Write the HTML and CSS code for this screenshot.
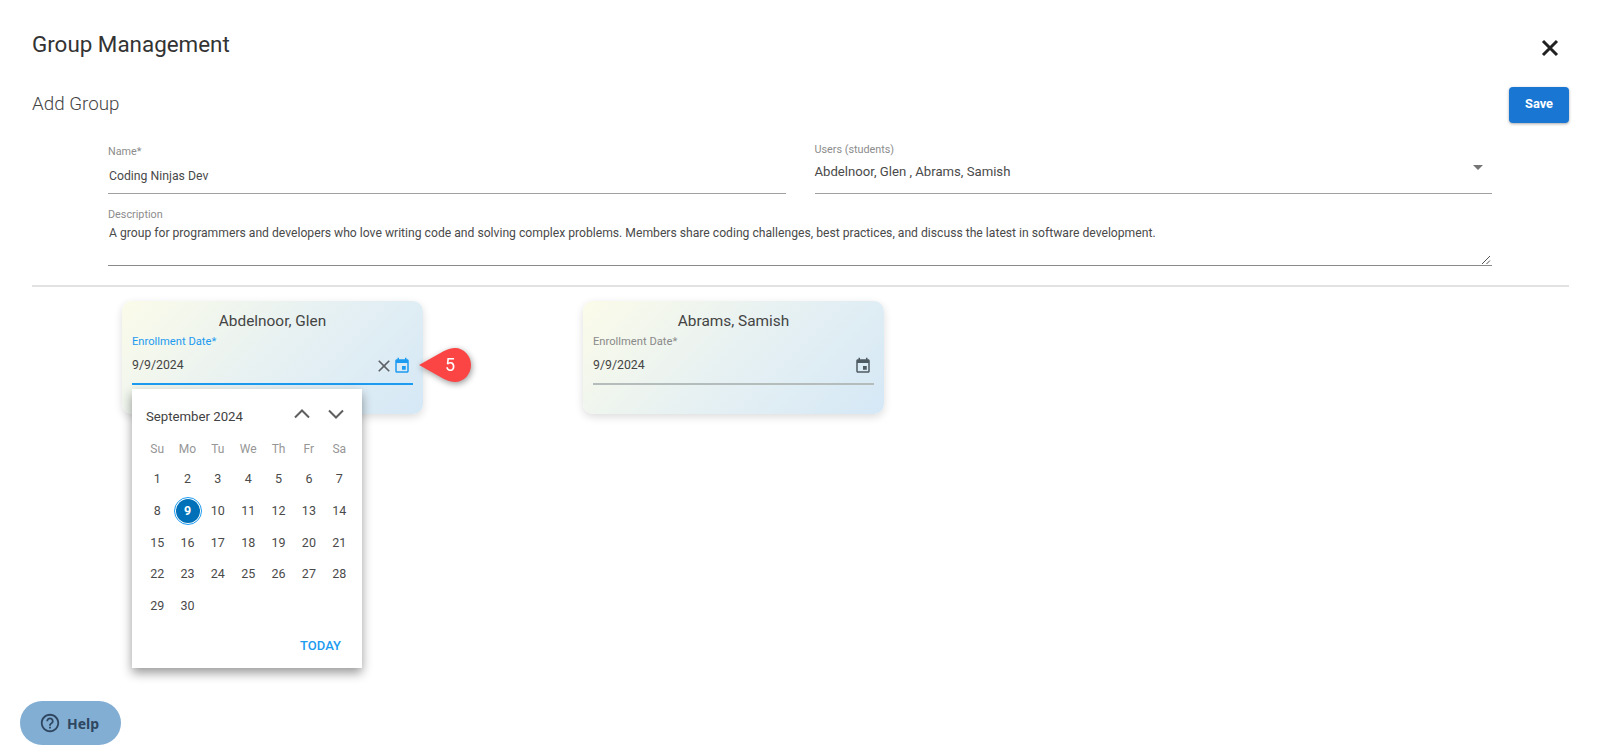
FILE: index.html
```html
<!DOCTYPE html>
<html lang="en">
<head>
<meta charset="utf-8">
<title>Group Management</title>
<link rel="stylesheet" href="styles.css">
</head>
<body>
<main class="page">
  <header class="title-row">
    <h1 class="title">Group Management</h1>
    <button class="close" aria-label="Close"><svg viewBox="0 0 20 20" width="20" height="20"><path d="M3 3 17 17M17 3 3 17"/></svg></button>
  </header>
  <div class="sub-row">
    <h2 class="subtitle">Add Group</h2>
    <button class="save">Save</button>
  </div>
  <form class="form">
    <div class="form-row">
      <div class="field">
        <span class="label">Name*</span>
        <span class="value name-value">Coding Ninjas Dev</span>
      </div>
      <div class="field select">
        <span class="label">Users (students)</span>
        <span class="value">Abdelnoor, Glen , Abrams, Samish</span>
        <span class="caret"></span>
      </div>
    </div>
    <div class="field desc">
      <span class="label">Description</span>
      <span class="value">A group for programmers and developers who love writing code and solving complex problems. Members share coding challenges, best practices, and discuss the latest in software development.</span>
      <svg class="resize" viewBox="0 0 10 10" width="10" height="10"><path d="M1 9 9 1M5.5 9 9 5.5"/></svg>
    </div>
  </form>
  <hr class="divider">
  <section class="cards">
    <article class="card">
      <h3 class="card-name">Abdelnoor, Glen</h3>
      <span class="date-label active">Enrollment Date*</span>
      <div class="date-input active">
        <span class="date-value">9/9/2024</span>
        <svg class="clear-icon" viewBox="0 0 24 24" width="20" height="20"><path d="M19 6.41 17.59 5 12 10.59 6.41 5 5 6.41 10.59 12 5 17.59 6.41 19 12 13.41 17.59 19 19 17.59 13.41 12z"/></svg>
        <svg class="cal-icon" viewBox="0 0 24 24" width="18" height="18"><path d="M19 3h-1V1h-2v2H8V1H6v2H5c-1.11 0-2 .9-2 2v14c0 1.1.89 2 2 2h14c1.1 0 2-.9 2-2V5c0-1.1-.9-2-2-2zm0 16H5V8h14v11zM12 12h5v5h-5z"/></svg>
      </div>
      <div class="callout">
        <svg viewBox="0 0 52 34" width="52" height="34"><path d="M0 17 25 3C29 1 33 0 36 0c9 0 16 8 16 17s-7 17-16 17c-3 0-7-1-11-3z"/></svg>
        <span class="callout-num">5</span>
      </div>
      <div class="picker">
        <div class="picker-head">
          <span class="month">September 2024</span>
          <svg viewBox="0 0 24 24" width="24" height="24"><path d="M5 15.5 12 8.5l7 7" /></svg>
          <svg viewBox="0 0 24 24" width="24" height="24"><path d="M5 8.5 12 15.5l7-7" /></svg>
        </div>
        <div class="week">
          <span>Su</span><span>Mo</span><span>Tu</span><span>We</span><span>Th</span><span>Fr</span><span>Sa</span>
        </div>
        <div class="days">
          <span>1</span><span>2</span><span>3</span><span>4</span><span>5</span><span>6</span><span>7</span>
          <span>8</span><span class="sel"><b>9</b></span><span>10</span><span>11</span><span>12</span><span>13</span><span>14</span>
          <span>15</span><span>16</span><span>17</span><span>18</span><span>19</span><span>20</span><span>21</span>
          <span>22</span><span>23</span><span>24</span><span>25</span><span>26</span><span>27</span><span>28</span>
          <span>29</span><span>30</span>
        </div>
        <div class="picker-foot"><span class="today">TODAY</span></div>
      </div>
    </article>
    <article class="card">
      <h3 class="card-name">Abrams, Samish</h3>
      <span class="date-label">Enrollment Date*</span>
      <div class="date-input">
        <span class="date-value">9/9/2024</span>
        <svg class="cal-icon" viewBox="0 0 24 24" width="18" height="18"><path d="M19 3h-1V1h-2v2H8V1H6v2H5c-1.11 0-2 .9-2 2v14c0 1.1.89 2 2 2h14c1.1 0 2-.9 2-2V5c0-1.1-.9-2-2-2zm0 16H5V8h14v11zM12 12h5v5h-5z"/></svg>
      </div>
    </article>
  </section>
</main>
<button class="help">
  <svg viewBox="0 0 24 24" width="22" height="22"><path d="M11 18h2v-2h-2v2zm1-16C6.48 2 2 6.48 2 12s4.48 10 10 10 10-4.48 10-10S17.52 2 12 2zm0 18c-4.41 0-8-3.59-8-8s3.59-8 8-8 8 3.59 8 8-3.59 8-8 8zm0-14c-2.21 0-4 1.79-4 4h2c0-1.1.9-2 2-2s2 .9 2 2c0 2-3 1.75-3 5h2c0-2.25 3-2.5 3-5 0-2.21-1.79-4-4-4z"/></svg>
  <span>Help</span>
</button>
</body>
</html>
```

FILE: styles.css
```css
* { box-sizing: border-box; }
html, body { margin: 0; height: 755px; overflow: hidden; background: #fff; }
body { font-family: Roboto, "Liberation Sans", sans-serif; color: #424242; }
.page { padding: 0 31px 0 32px; }

.title-row { display: flex; justify-content: space-between; align-items: center; height: 88px; }
.title { margin: 0; font-size: 22.4px; font-weight: 400; color: #333; }
.close { border: 0; background: none; padding: 0; margin: 7px 9px 0 0; width: 20px; height: 20px; }
.close svg { display: block; fill: none; stroke: #212121; stroke-width: 3; }

.sub-row { display: flex; justify-content: space-between; align-items: center; height: 36px; margin-top: -1px; }
.subtitle { margin: 0 0 2px; font-size: 18.8px; font-weight: 300; color: #444; }
.save { width: 60px; height: 36px; padding: 0 0 4px; border: 0; border-radius: 4px; background: #1976d2; color: #fff; font: 700 12.8px Roboto, sans-serif; box-shadow: 0 1px 3px rgba(0,0,0,.35); }

.form { padding: 16px 77px 0 76px; }
.form-row { display: flex; gap: 29px; }
.field { flex: 1; position: relative; display: flex; flex-direction: column; border-bottom: 1px solid #a0a0a0; }
.form-row .field { height: 55px; padding-top: 6px; }
.label { font-size: 10.8px; color: #8c8c8c; line-height: 14px; }
.value { font-size: 12.17px; color: #4a4a4a; line-height: 16px; padding-left: 1px; }
.form-row .value { margin-top: 9px; font-size: 12.25px; }
.form-row .select { padding-top: 4px; }
.form-row .select .value { margin-top: 7px; font-size: 13.15px; padding-left: 0; }
.caret { position: absolute; right: 9px; top: 26px; width: 0; height: 0; border: 5px solid transparent; border-top-color: #757575; border-bottom: 0; }
.desc { margin-top: 14px; height: 58px; border-bottom-color: #8a8a8a; }
.desc .value { margin-top: 3px; }
.resize { position: absolute; right: 1px; bottom: 0; fill: none; stroke: #555; stroke-width: 1; }

.divider { margin: 19px 0 0; border: 0; border-top: 2px solid #e2e2e2; }

.cards { display: flex; gap: 160px; padding: 14px 0 0 90px; }
.card { position: relative; width: 301px; height: 113px; border-radius: 10px; padding: 11px 10px 0; background: linear-gradient(135deg, #fbfbe9 0%, #e5f0f3 55%, #d5e8f6 100%); box-shadow: 0 3px 8px rgba(0,0,0,.14); }
.card-name { margin: 0; text-align: center; font-size: 15.4px; font-weight: 400; line-height: 18px; color: #444; }
.date-label { display: block; margin-top: 5px; font-size: 11.2px; line-height: 14px; color: #8a8a8a; }
.date-label.active { color: #1d9bf0; }
.date-input { display: flex; align-items: center; height: 36px; border-bottom: 2px solid #b4bcbc; padding-right: 2px; }
.date-input.active { border-bottom-color: #1d9bf0; }
.date-value { flex: 1; margin-bottom: 2px; font-size: 12.3px; color: #444; }
.clear-icon { fill: #5f6368; margin-right: -1px; }
.cal-icon { fill: #4f5b62; }
.date-input.active .cal-icon { fill: #1d9bf0; }

.callout { position: absolute; left: 297px; top: 47px; width: 52px; height: 34px; filter: drop-shadow(1px 2px 3px rgba(0,0,0,.4)); }
.callout svg { display: block; fill: #fb4444; }
.callout-num { position: absolute; left: 20px; top: 0; width: 22px; text-align: center; line-height: 34px; color: #fff; font-size: 18px; }

.picker { position: absolute; z-index: 2; left: 10px; top: 88px; width: 230px; height: 279px; background: #fff; box-shadow: 0 5px 10px rgba(0,0,0,.4); padding: 11px 10px 0 10px; }
.picker-head { display: flex; align-items: center; height: 32px; gap: 10px; padding-right: 4px; }
.picker-head .month { flex: 1; padding-left: 4px; font-size: 13.2px; color: #424242; }
.picker-head svg { margin-bottom: 4px; fill: none; stroke: #5f5f5f; stroke-width: 2; }
.week, .days { display: grid; grid-template-columns: repeat(7, 30.35px); justify-items: center; }
.week { margin-top: 2px; height: 29px; align-items: center; font-size: 12px; color: #969696; }
.days { font-size: 12.5px; color: #4a4a4a; grid-auto-rows: 31.7px; align-items: center; }
.days span { display: flex; align-items: center; justify-content: center; }
.sel { width: 28px; height: 28px; border-radius: 50%; border: 1px solid #1d9bf0; }
.sel b { display: flex; align-items: center; justify-content: center; width: 24px; height: 24px; border-radius: 50%; background: #0071b8; color: #fff; font-weight: 700; }
.picker-foot { display: flex; justify-content: flex-end; padding: 17px 11px 0 0; }
.today { font-size: 13px; font-weight: 500; color: #1d9bf0; }

.help { position: fixed; left: 20px; bottom: 10px; width: 101px; height: 44px; display: flex; align-items: center; gap: 6px; padding: 0 0 0 19px; border: 0; border-radius: 22px; background: #82aed4; color: #2f4660; font: 700 14px "Noto Sans", sans-serif; }
.help svg { fill: #2f4660; flex: none; }
```
